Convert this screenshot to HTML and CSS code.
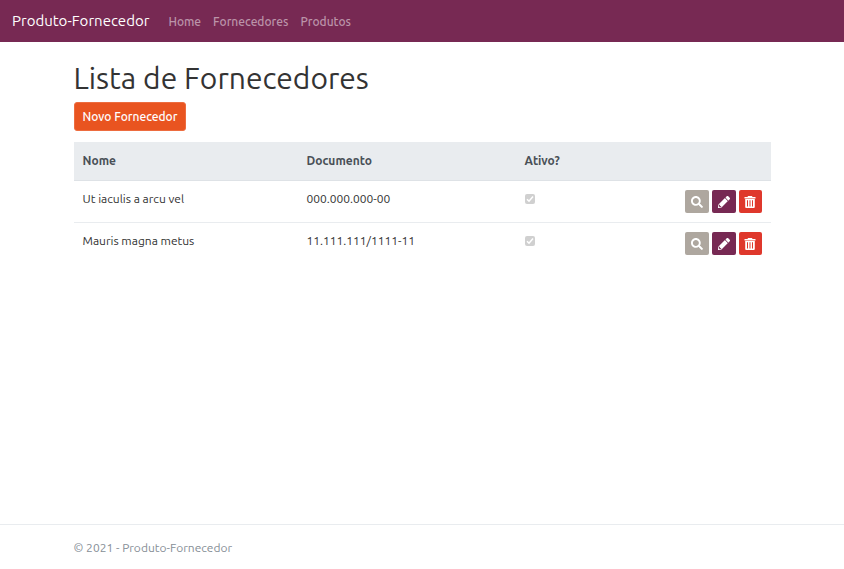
FILE: index.html
```
<!DOCTYPE html>
<html lang="pt-BR">
<head>
<meta charset="utf-8">
<meta name="viewport" content="width=device-width, initial-scale=1">
<title>Lista de Fornecedores</title>
<link rel="stylesheet" href="styles.css">
</head>
<body>
<svg width="0" height="0" class="sprite" aria-hidden="true">
  <symbol id="search" viewBox="0 0 512 512"><path d="M505 442.700L405.300 343c-4.500-4.500-10.600-7-17-7H372c27.600-35.300 44-79.700 44-128C416 93.100 322.900 0 208 0S0 93.100 0 208s93.100 208 208 208c48.300 0 92.700-16.400 128-44v16.300c0 6.400 2.500 12.500 7 17l99.700 99.700c9.400 9.400 24.600 9.400 33.900 0l28.300-28.300c9.400-9.400 9.400-24.600.1-34zM208 336c-70.700 0-128-57.200-128-128 0-70.700 57.200-128 128-128 70.700 0 128 57.200 128 128 0 70.700-57.200 128-128 128z"/></symbol>
  <symbol id="pencil" viewBox="0 0 512 512"><path d="M497.900 142.100l-46.100 46.100c-4.700 4.700-12.300 4.700-17 0l-111-111c-4.700-4.700-4.700-12.300 0-17l46.100-46.100c18.700-18.700 49.100-18.700 67.900 0l60.100 60.100c18.800 18.700 18.800 49.100 0 67.900zM284.200 99.800L21.600 362.400.4 483.900c-2.900 16.400 11.400 30.600 27.800 27.800l121.500-21.300 262.600-262.600c4.700-4.700 4.700-12.300 0-17l-111-111c-4.800-4.700-12.400-4.700-17.100 0zM88 424h48v36.300l-64.500 11.300-31.100-31.100L51.700 376H88v48z"/></symbol>
  <symbol id="trash" viewBox="0 0 12 12"><path fill-rule="evenodd" d="M4 0h4l.5 1H11.500v1.500H.5V1h3zM1.200 3h9.600v8a1 1 0 0 1-1 1H2.200a1 1 0 0 1-1-1zM3 4.200v6.300h1V4.200zM5.500 4.200v6.300h1V4.200zM8 4.200v6.300h1V4.200z"/></symbol>
</svg>
<header class="navbar">
  <a class="brand" href="#">Produto-Fornecedor</a>
  <nav class="nav">
    <a href="#">Home</a>
    <a href="#">Fornecedores</a>
    <a href="#">Produtos</a>
  </nav>
</header>
<main class="container">
  <h1>Lista de Fornecedores</h1>
  <a class="btn" href="#">Novo Fornecedor</a>
  <table class="table">
    <thead>
      <tr><th class="col-name">Nome</th><th class="col-doc">Documento</th><th class="col-active">Ativo?</th><th></th></tr>
    </thead>
    <tbody>
      <tr>
        <td>Ut iaculis a arcu vel</td>
        <td>000.000.000-00</td>
        <td><input type="checkbox" class="check" aria-label="Ativo" checked disabled></td>
        <td>
          <div class="actions">
            <a class="icon-btn view" href="#" aria-label="Detalhes"><svg><use href="#search"/></svg></a>
            <a class="icon-btn edit" href="#" aria-label="Editar"><svg><use href="#pencil"/></svg></a>
            <a class="icon-btn delete" href="#" aria-label="Excluir"><svg><use href="#trash"/></svg></a>
          </div>
        </td>
      </tr>
      <tr>
        <td>Mauris magna metus</td>
        <td>11.111.111/1111-11</td>
        <td><input type="checkbox" class="check" aria-label="Ativo" checked disabled></td>
        <td>
          <div class="actions">
            <a class="icon-btn view" href="#" aria-label="Detalhes"><svg><use href="#search"/></svg></a>
            <a class="icon-btn edit" href="#" aria-label="Editar"><svg><use href="#pencil"/></svg></a>
            <a class="icon-btn delete" href="#" aria-label="Excluir"><svg><use href="#trash"/></svg></a>
          </div>
        </td>
      </tr>
    </tbody>
  </table>
</main>
<footer class="footer">
  <div class="container">© 2021 - Produto-Fornecedor</div>
</footer>
</body>
</html>
```
FILE: styles.css
```
* { box-sizing: border-box; }

body {
  margin: 0;
  min-height: 100vh;
  display: flex;
  flex-direction: column;
  font-family: Ubuntu, "Noto Sans", sans-serif;
  font-size: 12px;
  line-height: 18px;
  color: #333;
  background: #fff;
}

a { text-decoration: none; }

.sprite { position: absolute; }

.navbar {
  display: flex;
  align-items: baseline;
  gap: 19px;
  padding: 8px 12px;
  background: #772953;
}

.brand {
  color: #fff;
  font-size: 15px;
  line-height: 26px;
}

.nav {
  display: flex;
  gap: 12px;
}

.nav a {
  color: #bb94a9;
  font-weight: 500;
}

.container {
  width: 100%;
  max-width: 697px;
  margin: 0 auto;
}

main { flex: 1; padding-top: 18px; }

h1 {
  margin: 0 0 6px;
  font-size: 30px;
  font-weight: 400;
  line-height: 36px;
}

.btn {
  display: inline-block;
  padding: 5px 8px;
  border: 1px solid #ed6c3f;
  border-radius: 3px;
  background: #e95420;
  color: #fff;
  font-weight: 500;
  line-height: 17px;
}

.table {
  width: 100%;
  margin-top: 11px;
  border-collapse: collapse;
  table-layout: fixed;
}

.table th,
.table td {
  padding: 9px;
  text-align: left;
  vertical-align: top;
}

.table th {
  padding: 10px 9px;
  border-bottom: 1px solid #dee2e6;
  background: #e9ecef;
  color: #495057;
  font-weight: 700;
}

.table tbody tr + tr td { border-top: 1px solid #e9ecef; }

.col-name { width: 224px; }
.col-doc { width: 218px; }
.col-active { width: 90px; }

.check {
  appearance: none;
  display: block;
  width: 10px;
  height: 10px;
  margin: 4px 0;
  border-radius: 2px;
  background: #d0d0d0 url("data:image/svg+xml,%3Csvg xmlns='http://www.w3.org/2000/svg' viewBox='0 0 10 10'%3E%3Cpath d='M2 5.200l2 2L8 2.500' fill='none' stroke='white' stroke-width='1.500'/%3E%3C/svg%3E");
}

.actions {
  display: flex;
  justify-content: flex-end;
  gap: 3px;
}

.icon-btn {
  display: flex;
  align-items: center;
  justify-content: center;
  width: 24px;
  height: 23px;
  border-radius: 2px;
  color: #fff;
}

.icon-btn svg {
  width: 12px;
  height: 12px;
  fill: currentColor;
}

.view { background: #aea79f; }
.edit { background: #772953; }
.delete { width: 23px; background: #df382c; }

.footer {
  padding: 14px 0 12px;
  border-top: 1px solid #e9ecef;
  color: #868e96;
}
```
